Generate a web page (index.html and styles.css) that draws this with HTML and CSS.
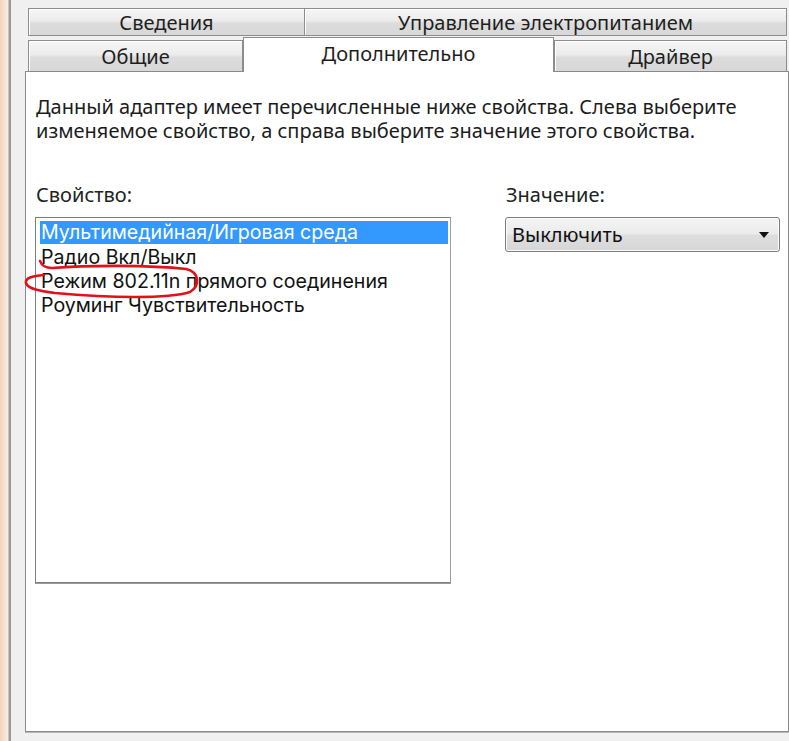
FILE: index.html
```html
<!DOCTYPE html>
<html lang="ru">
<head>
<meta charset="utf-8">
<title>Дополнительно</title>
<link rel="stylesheet" href="styles.css">
</head>
<body>
<div class="window">
  <div class="edge"></div>
  <div class="content">
    <div class="tabs">
      <div class="tab-row row-back">
        <div class="tab t-info">Сведения</div>
        <div class="tab t-power">Управление электропитанием</div>
      </div>
      <div class="tab-row row-front">
        <div class="tab t-general">Общие</div>
        <div class="tab t-adv selected">Дополнительно</div>
        <div class="tab t-driver">Драйвер</div>
      </div>
    </div>
    <div class="panel">
      <p class="desc">Данный адаптер имеет перечисленные ниже свойства. Слева выберите изменяемое свойство, а справа выберите значение этого свойства.</p>
      <div class="fields">
        <div class="col-left">
          <div class="label">Свойство:</div>
          <ul class="listbox">
            <li class="item active">Мультимедийная/Игровая среда</li>
            <li class="item">Радио Вкл/Выкл</li>
            <li class="item">Режим 802.11n прямого соединения</li>
            <li class="item">Роуминг Чувствительность</li>
          </ul>
        </div>
        <div class="col-right">
          <div class="label">Значение:</div>
          <div class="select">
            <span class="select-text">Выключить</span>
            <svg class="arrow" width="10" height="6" viewBox="0 0 10 6"><path d="M0 0 H10 L5 6 Z" fill="#111"/></svg>
          </div>
        </div>
      </div>
    </div>
  </div>
</div>
<svg class="annotation" width="789" height="741" viewBox="0 0 789 741">
  <path d="M40 261 C42 266 45 268 52 268 C90 265 150 265 186 269 C199 272 201 285 190 292 C168 299 110 298 55 293 C40 291 28 289 26 283 C25 278 32 276 44 275" fill="none" stroke="#e3101a" stroke-width="2.6" stroke-linecap="round" stroke-linejoin="round"/>
</svg>
</body>
</html>
```
FILE: styles.css
```css
* { box-sizing: border-box; }
html, body { margin: 0; padding: 0; }
body {
  width: 789px;
  height: 741px;
  overflow: hidden;
  background: #f0f0f0;
  font-family: "Noto Sans", "Open Sans", sans-serif;
  color: #1a1a1a;
  position: relative;
}
.window {
  display: flex;
  height: 741px;
}
.edge {
  width: 11px;
  flex: none;
  background: linear-gradient(to right, #f1d3bd 0, #fae6d8 6px, #f7ede6 8px, #9a9a9a 9px, #9a9a9a 11px);
}
.content {
  flex: 1;
  padding: 8px 1px 0 14px;
  display: flex;
  flex-direction: column;
}
.tabs {
  margin-left: 3px;
  display: flex;
  flex-direction: column;
  position: relative;
  z-index: 2;
}
.tab-row {
  display: flex;
  align-items: flex-end;
}
.row-back { height: 28px; }
.row-front { height: 35px; }
.tab {
  font-size: 20px;
  line-height: 1;
  display: flex;
  align-items: center;
  justify-content: center;
  border: 1px solid #8d8d8d;
  border-bottom: none;
  background: linear-gradient(to bottom, #f6f6f6 0%, #ececec 45%, #dcdcdc 55%, #d8d8d8 100%);
  box-shadow: inset 1px 1px 0 #ffffff;
  color: #1e1e1e;
}
.row-back .tab { height: 28px; border-bottom: 1px solid #8d8d8d; padding-top: 2px; }
.t-info { width: 277px; }
.t-power { width: 482px; border-left: none; }
.row-front .tab { height: 31px; padding-top: 2px; }
.t-general { width: 215px; }
.t-adv { width: 311px; }
.t-driver { width: 233px; }
.tab.selected {
  height: 35px;
  background: #ffffff;
  box-shadow: none;
  margin-bottom: -1px;
  padding-top: 0;
  padding-bottom: 3px;
  position: relative;
  z-index: 3;
}
.panel {
  width: 764px;
  height: 661px;
  background: #ffffff;
  border: 1px solid #8a8a8a;
  box-shadow: 0 1px 0 #b8b8b8, 1px 0 0 #d0d0d0;
  padding: 23px 10px 0 10px;
  position: relative;
  z-index: 1;
}
.desc {
  margin: 0;
  font-size: 20px;
  line-height: 24px;
  color: #1c1c1c;
}
.fields {
  display: grid;
  grid-template-columns: 415px 275px;
  column-gap: 54px;
  margin-top: 40px;
}
.col-left, .col-right { display: flex; flex-direction: column; }
.label {
  font-size: 20px;
  line-height: 24px;
  color: #222;
  margin-bottom: 10px;
}
.col-right .label { padding-left: 1px; }
.listbox {
  list-style: none;
  margin: 0;
  margin-left: -1px;
  padding: 3px 2px 0 4px;
  height: 366px;
  border: 1px solid #7e7e7e;
  border-right-color: #a0a0a0;
  box-shadow: 0 1px 0 #9a9a9a;
}
.item {
  font-family: "Inter", "Noto Sans", sans-serif;
  font-size: 19.6px;
  height: 24px;
  line-height: 24px;
  padding-left: 1px;
  color: #111;
  white-space: nowrap;
}
.item.active {
  background: #3399ff;
  color: #ffffff;
  height: 23px;
  line-height: 23px;
  margin-bottom: 1px;
}
.select {
  height: 35px;
  border: 1px solid #7c7c7c;
  border-radius: 3px;
  background: linear-gradient(to bottom, #f4f4f4 0%, #ebebeb 48%, #dedede 52%, #d6d6d6 100%);
  box-shadow: inset 0 0 0 1px #fbfbfb;
  display: flex;
  align-items: center;
  justify-content: space-between;
  padding: 0 10px 0 6px;
}
.select-text { font-size: 20px; color: #111; }
.arrow { display: block; }
.annotation {
  position: absolute;
  left: 0;
  top: 0;
  pointer-events: none;
  z-index: 10;
}
```
